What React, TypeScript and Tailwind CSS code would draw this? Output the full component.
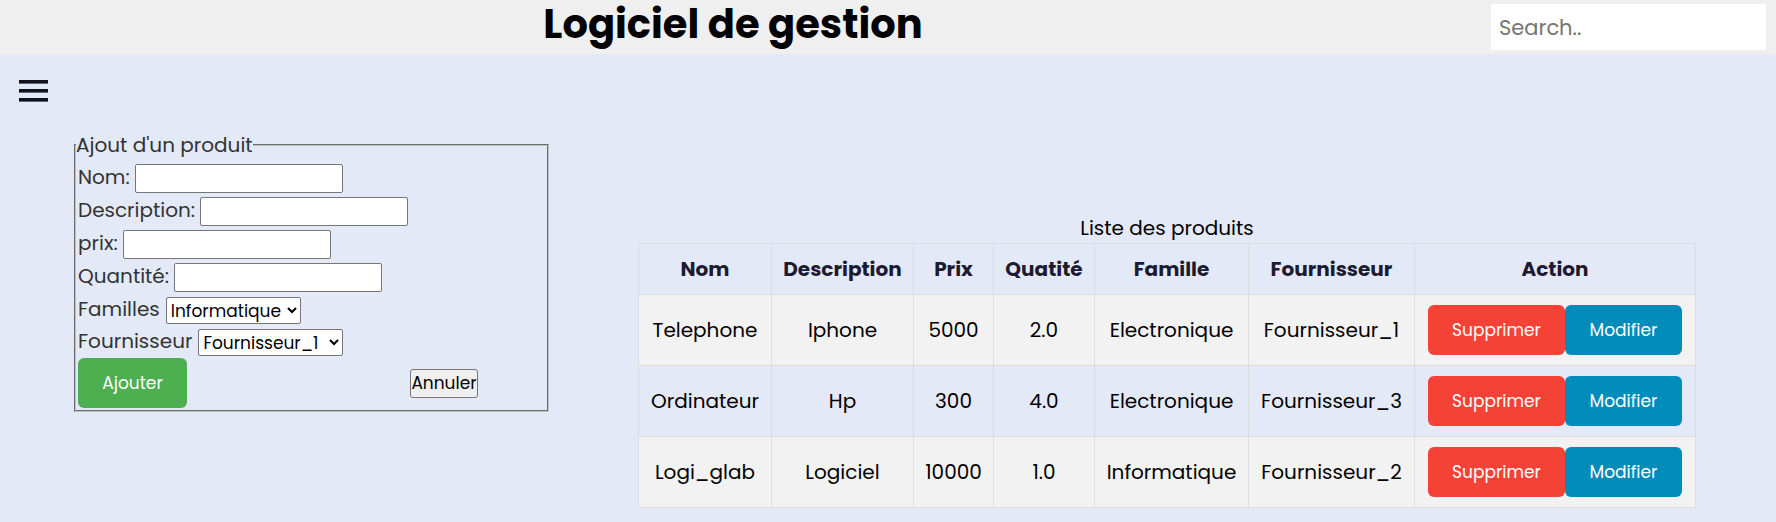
import React from "react";

type Product = {
  name: string;
  description: string;
  price: string;
  quantity: string;
  family: string;
  supplier: string;
};

const products: Product[] = [
  { name: "Telephone", description: "Iphone", price: "5000", quantity: "2.0", family: "Electronique", supplier: "Fournisseur_1" },
  { name: "Ordinateur", description: "Hp", price: "300", quantity: "4.0", family: "Electronique", supplier: "Fournisseur_3" },
  { name: "Logi_glab", description: "Logiciel", price: "10000", quantity: "1.0", family: "Informatique", supplier: "Fournisseur_2" },
];

const columns = [
  { title: "Nom", width: "w-[133px]" },
  { title: "Description", width: "w-[142px]" },
  { title: "Prix", width: "w-[80px]" },
  { title: "Quatité", width: "w-[101px]" },
  { title: "Famille", width: "w-[154px]" },
  { title: "Fournisseur", width: "w-[166px]" },
  { title: "Action", width: "w-[281px]" },
];

const fields = [
  { id: "nom", label: "Nom:" },
  { id: "description", label: "Description:" },
  { id: "prix", label: "prix:" },
  { id: "quantite", label: "Quantité:" },
];

const selects = [
  { id: "familles", label: "Familles", width: "w-[135px]", options: ["Informatique", "Electronique"] },
  { id: "fournisseur", label: "Fournisseur", width: "w-[145px]", options: ["Fournisseur_1", "Fournisseur_2", "Fournisseur_3"] },
];

function Header() {
  return (
    <header className="flex h-[54px] items-center bg-[#efefef] pr-[10px]">
      <h1 className="flex-1 pb-1.5 text-center text-[40px] leading-[48px] font-bold text-black">Logiciel de gestion</h1>
      <input
        type="text"
        aria-label="Search"
        placeholder="Search.."
        className="ml-[25px] h-[46px] w-[275px] bg-white px-2 text-[21px] placeholder:text-[#757575]"
      />
    </header>
  );
}

function ProductForm() {
  return (
    <form>
      <fieldset className="border-2 border-[#c0c0c0] px-0.5 pb-0.5 text-[#333] [border-style:groove]">
        <legend className="-ml-0.5 leading-[30px]">Ajout d'un produit</legend>
        <div className="mt-1 flex flex-col gap-1">
          {fields.map((f) => (
            <div key={f.id} className="flex h-[29px] items-center gap-[5px]">
              <label htmlFor={f.id} className="pb-1">{f.label}</label>
              <input id={f.id} type="text" className="h-[29px] w-[208px] rounded-xs border border-[#767676] bg-white px-1 text-[17px] text-black" />
            </div>
          ))}
          {selects.map((s) => (
            <div key={s.id} className="flex h-7 items-center gap-1.5">
              <label htmlFor={s.id} className="pb-0.5">{s.label}</label>
              <select id={s.id} className={`h-[27px] rounded-xs border border-[#767676] bg-white text-[17px] text-black ${s.width}`}>
                {s.options.map((o) => (
                  <option key={o}>{o}</option>
                ))}
              </select>
            </div>
          ))}
        </div>
        <div className="mt-0.5 flex items-center justify-between pr-[67px]">
          <button type="submit" className="h-[50px] w-[109px] rounded-md bg-[#4caf50] text-[17px] text-white">Ajouter</button>
          <button type="reset" className="h-[29px] w-[68px] rounded-[3px] border border-[#767676] bg-[#efefef] text-[17px] leading-[26px] text-black">Annuler</button>
        </div>
      </fieldset>
    </form>
  );
}

function ProductTable() {
  return (
    <table className="w-full table-fixed border-collapse text-center text-black">
      <caption className="leading-[30px]">Liste des produits</caption>
      <thead>
        <tr className="h-[51px] text-[#1d1b31]">
          {columns.map((c) => (
            <th key={c.title} scope="col" className={`border border-[#ddd] font-bold ${c.width}`}>{c.title}</th>
          ))}
        </tr>
      </thead>
      <tbody>
        {products.map((p) => (
          <tr key={p.name} className="h-[71px] odd:bg-[#f2f2f2]">
            <td className="border border-[#ddd]">{p.name}</td>
            <td className="border border-[#ddd]">{p.description}</td>
            <td className="border border-[#ddd]">{p.price}</td>
            <td className="border border-[#ddd]">{p.quantity}</td>
            <td className="border border-[#ddd]">{p.family}</td>
            <td className="border border-[#ddd]">{p.supplier}</td>
            <td className="border border-[#ddd]">
              <div className="flex justify-center text-[17px] text-white">
                <button type="button" className="h-[50px] w-[137px] rounded-md bg-[#f44336]">Supprimer</button>
                <button type="button" className="h-[50px] w-[117px] rounded-md bg-[#008cba]">Modifier</button>
              </div>
            </td>
          </tr>
        ))}
      </tbody>
    </table>
  );
}

export default function App() {
  return (
    <div className="min-h-screen bg-[#e4e9f7] font-['Poppins','Inter',sans-serif] text-[20px] leading-[30px]">
      <Header />
      <button type="button" aria-label="Menu" className="mt-[26px] ml-[19px] block">
        <svg width="29" height="22" viewBox="0 0 29 22" fill="#11101d" className="block">
          <rect width="29" height="3.6" />
          <rect y="9" width="29" height="3.6" />
          <rect y="18" width="29" height="3.6" />
        </svg>
      </button>
      <main className="mt-7 grid grid-cols-[475fr_1058fr] items-start gap-[89px] pr-20 pl-[74px]">
        <ProductForm />
        <div className="pt-[83px]">
          <ProductTable />
        </div>
      </main>
    </div>
  );
}
